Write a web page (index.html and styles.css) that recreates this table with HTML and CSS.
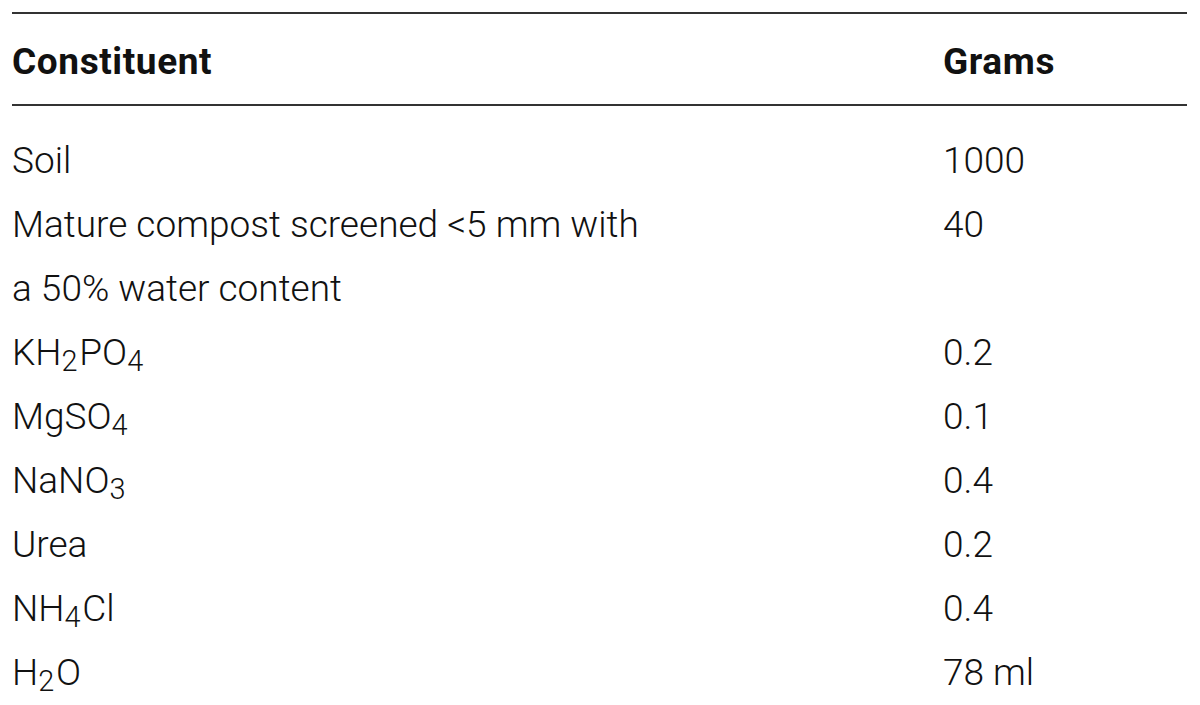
FILE: index.html
```html
<!DOCTYPE html>
<html>
<head>
<meta charset="utf-8">
<link rel="stylesheet" href="styles.css">
</head>
<body>
<table class="tbl">
  <thead>
    <tr><th class="c1">Constituent</th><th class="c2">Grams</th></tr>
  </thead>
  <tbody>
    <tr class="first"><td>Soil</td><td>1000</td></tr>
    <tr><td>Mature compost screened &lt;5&nbsp;mm with<br>a 50% water content</td><td class="top">40</td></tr>
    <tr><td>KH<sub>2</sub>PO<sub>4</sub></td><td>0.2</td></tr>
    <tr><td>MgSO<sub>4</sub></td><td>0.1</td></tr>
    <tr><td>NaNO<sub>3</sub></td><td>0.4</td></tr>
    <tr><td>Urea</td><td>0.2</td></tr>
    <tr><td>NH<sub>4</sub>Cl</td><td>0.4</td></tr>
    <tr><td>H<sub>2</sub>O</td><td>78 ml</td></tr>
  </tbody>
</table>
</body>
</html>
```

FILE: styles.css
```css
html, body {
  margin: 0;
  padding: 0;
  background: #ffffff;
}
body {
  padding: 12px 13px 0 12px;
  font-family: Roboto, "Liberation Sans", sans-serif;
  color: #111;
}
.tbl {
  width: 1175px;
  border-collapse: collapse;
}
.tbl th {
  font-weight: 700;
  font-size: 37px;
  letter-spacing: 0.6px;
  text-align: left;
  padding: 4px 0 0 0;
  height: 86px;
  border-top: 2px solid #333;
  border-bottom: 2px solid #333;
  vertical-align: middle;
}
.tbl th.c1 { width: 931px; }
.tbl td {
  font-size: 37px;
  font-weight: 300;
  line-height: 64px;
  padding: 0;
  vertical-align: top;
}
.tbl tr.first td {
  padding-top: 23px;
}
.tbl sub {
  font-size: 0.78em;
  line-height: 0;
  vertical-align: -0.2em;
  margin-right: 0.06em;
}
```
